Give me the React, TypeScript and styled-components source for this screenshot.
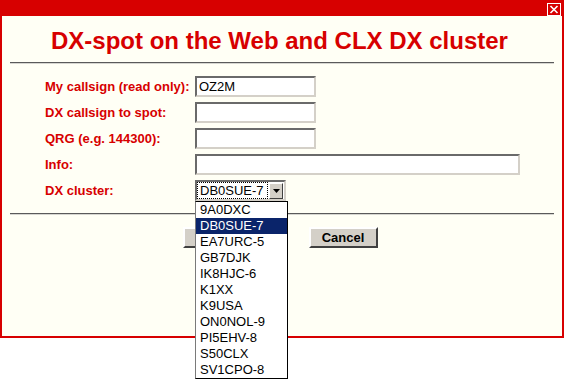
import React from 'react';
import styled, { createGlobalStyle } from 'styled-components';

// --- STYLES ---

const red = '#d70000';
const cream = '#fffff5';

const GlobalStyle = createGlobalStyle`
  html, body {
    margin: 0;
    padding: 0;
    background: #ffffff;
    font-family: "Liberation Sans", Arial, sans-serif;
  }
`;

// página inteira, para a lista aberta não ser cortada
const Page = styled.div`
  width: 564px;
  height: 380px;
  background: #ffffff;
`;

// moldura vermelha da janela (barra de título + bordas)
const Window = styled.div`
  width: 564px;
  height: 338px;
  box-sizing: border-box;
  background: ${red};
  padding: 0 2px 2px;
  display: flex;
  flex-direction: column;
`;

const TitleBar = styled.div`
  height: 16px;
  flex-shrink: 0;
  display: flex;
  justify-content: flex-end;
  align-items: flex-start;
  padding: 3px 1px 0 0;
  box-sizing: border-box;
`;

const CloseBox = styled.div`
  width: 14px;
  height: 13px;
  box-sizing: border-box;
  border: 1px solid #ffffff;
  display: flex;
  align-items: center;
  justify-content: center;
`;

const Body = styled.div`
  flex: 1;
  background: ${cream};
  padding: 0 8px;
  display: flex;
  flex-direction: column;
`;

const Title = styled.h1`
  margin: 11px 0 0;
  padding-right: 5px;
  text-align: center;
  font-size: 24px;
  line-height: 28px;
  font-weight: bold;
  color: ${red};
`;

const Rule = styled.div<{ $top: number }>`
  margin-top: ${(p) => p.$top}px;
  height: 0;
  border-top: 1px solid #5a5a5a;
  border-bottom: 1px solid #d6d6d0;
`;

const Form = styled.div`
  margin-top: 12px;
  padding-left: 35px;
  display: grid;
  grid-template-columns: 150px auto;
  row-gap: 5px;
  align-items: center;
`;

const Label = styled.label`
  font-size: 13px;
  font-weight: bold;
  color: ${red};
  line-height: 16px;
`;

const TextInput = styled.input<{ $wide?: boolean }>`
  width: ${(p) => (p.$wide ? 325 : 121)}px;
  height: 21px;
  box-sizing: border-box;
  margin: 0;
  padding: 0 2px;
  background: #ffffff;
  border-style: solid;
  border-width: 2px;
  border-color: #6a6a6a #d4d0c8 #d4d0c8 #6a6a6a;
  font-family: "Liberation Sans", Arial, sans-serif;
  font-size: 13px;
  color: #000000;
  outline: none;
`;

const SelectWrap = styled.div`
  position: relative;
  width: 91px;
`;

const SelectBox = styled.div`
  width: 91px;
  height: 21px;
  box-sizing: border-box;
  border-style: solid;
  border-width: 2px;
  border-color: #6a6a6a #d4d0c8 #d4d0c8 #6a6a6a;
  background: #ffffff;
  display: flex;
  align-items: center;
  padding: 0 1px 0 0;
`;

const SelectValue = styled.span`
  flex: 1;
  height: 15px;
  line-height: 15px;
  margin-left: 1px;
  padding-left: 2px;
  outline: 1px dotted #000000;
  outline-offset: 0;
  font-size: 13px;
  color: #000000;
`;

const ArrowButton = styled.span`
  width: 14px;
  height: 16px;
  margin-left: 2px;
  box-sizing: border-box;
  background: #d4d0c8;
  border-style: solid;
  border-width: 1px;
  border-color: #ffffff #404040 #404040 #ffffff;
  display: flex;
  align-items: center;
  justify-content: center;
`;

// lista aberta do select, por cima do resto
const DropList = styled.ul`
  position: absolute;
  top: 21px;
  left: 0;
  width: 93px;
  margin: 0;
  padding: 0;
  list-style: none;
  box-sizing: border-box;
  background: #ffffff;
  border: 1px solid #000000;
  border-left-color: #7a7a7a;
  z-index: 5;
`;

const DropItem = styled.li<{ $active?: boolean }>`
  height: 16px;
  line-height: 16px;
  padding-left: 4px;
  font-size: 13px;
  color: ${(p) => (p.$active ? '#ffffff' : '#000000')};
  background: ${(p) => (p.$active ? '#0a246a' : 'transparent')};
`;

const ButtonRow = styled.div`
  margin-top: 12px;
  display: flex;
  justify-content: center;
  gap: 26px;
  padding-right: 4px;
`;

const Button = styled.button<{ $width: number }>`
  width: ${(p) => p.$width}px;
  height: 21px;
  box-sizing: border-box;
  margin: 0;
  padding: 0;
  background: #d4d0c8;
  border-style: solid;
  border-width: 2px;
  border-color: #ffffff #404040 #404040 #ffffff;
  font-family: "Liberation Sans", Arial, sans-serif;
  font-size: 13px;
  font-weight: bold;
  color: #000000;
`;

// --- COMPONENT ---

const clusters = [
  '9A0DXC',
  'DB0SUE-7',
  'EA7URC-5',
  'GB7DJK',
  'IK8HJC-6',
  'K1XX',
  'K9USA',
  'ON0NOL-9',
  'PI5EHV-8',
  'S50CLX',
  'SV1CPO-8',
];

const App: React.FC = () => {
  const selected = 'DB0SUE-7';

  return (
    <Page>
      <GlobalStyle />
      <Window>
        <TitleBar>
          <CloseBox>
            <svg width="10" height="9" viewBox="0 0 10 9">
              <path d="M1.5 1 L8.5 8 M8.5 1 L1.5 8" stroke="#ffffff" strokeWidth="1.6" />
            </svg>
          </CloseBox>
        </TitleBar>
        <Body>
          <Title>DX-spot on the Web and CLX DX cluster</Title>
          <Rule $top={7} />
          <Form>
            <Label>My callsign (read only):</Label>
            <TextInput readOnly value="OZ2M" />
            <Label>DX callsign to spot:</Label>
            <TextInput />
            <Label>QRG (e.g. 144300):</Label>
            <TextInput />
            <Label>Info:</Label>
            <TextInput $wide />
            <Label>DX cluster:</Label>
            <SelectWrap>
              <SelectBox>
                <SelectValue>{selected}</SelectValue>
                <ArrowButton>
                  <svg width="7" height="4" viewBox="0 0 7 4">
                    <path d="M0 0 H7 L3.5 4 Z" fill="#000000" />
                  </svg>
                </ArrowButton>
              </SelectBox>
              <DropList>
                {clusters.map((c) => (
                  <DropItem key={c} $active={c === selected}>
                    {c}
                  </DropItem>
                ))}
              </DropList>
            </SelectWrap>
          </Form>
          <Rule $top={12} />
          <ButtonRow>
            <Button $width={100}>Send</Button>
            <Button $width={69}>Cancel</Button>
          </ButtonRow>
        </Body>
      </Window>
    </Page>
  );
};

export default App;
